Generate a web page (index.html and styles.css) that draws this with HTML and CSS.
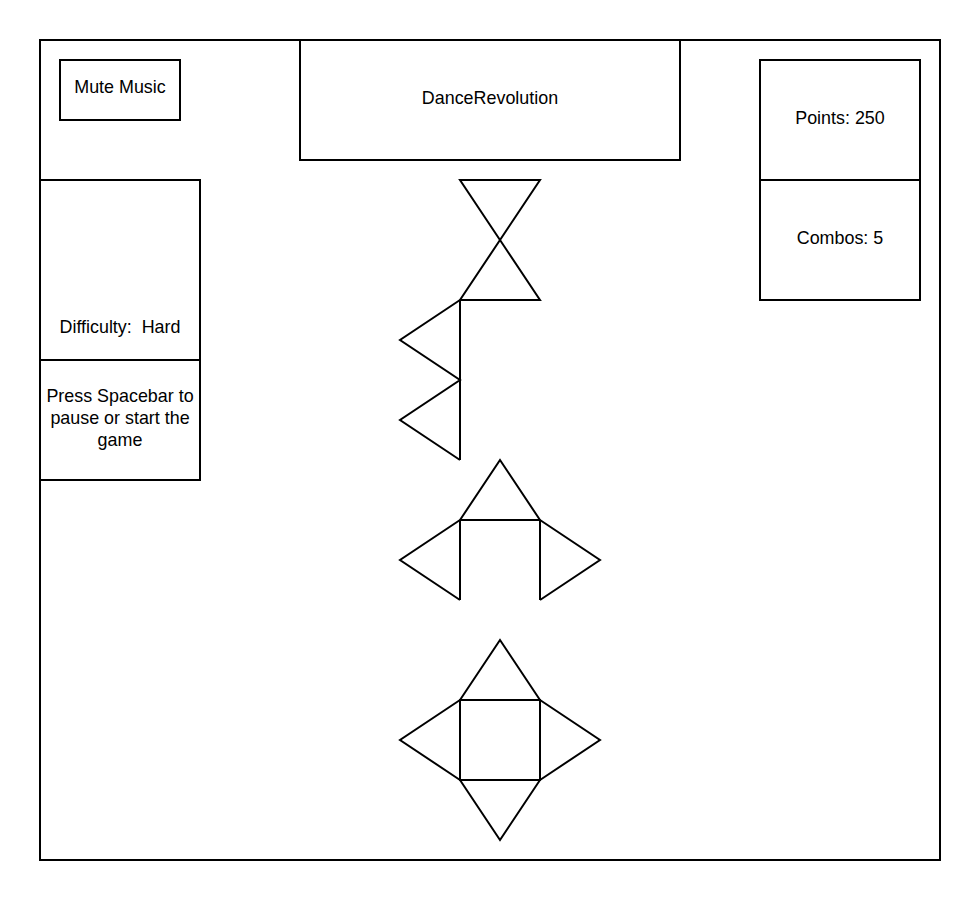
FILE: index.html
```html
<!DOCTYPE html>
<html lang="en">
<head>
    <meta charset="UTF-8">
    <meta name="viewport" content="width=device-width, initial-scale=1.0">
    <title>DanceRevolution</title>
    <link rel="stylesheet" href="styles.css">
</head>
<body>
    <div class="frame">
        <div class="side-left">
            <div class="box mute">Mute Music</div>
            <div class="box difficulty">Difficulty:&nbsp; Hard</div>
            <div class="box hint">Press Spacebar to pause or start the game</div>
        </div>

        <div class="center">
            <div class="box title">DanceRevolution</div>
            <!-- arrow lanes, drawn in page coordinates -->
            <svg class="arrows" width="240" height="690" viewBox="380 161 240 690">
                <g fill="none" stroke="#000" stroke-width="2">
                    <polygon points="460,180 540,180 500,240"/>
                    <polygon points="500,240 540,300 460,300"/>

                    <line x1="460" y1="300" x2="460" y2="460"/>
                    <polyline points="460,300 400,340 460,380 400,420 460,460"/>

                    <polyline points="460,600 460,520 500,460 540,520 540,600"/>
                    <line x1="460" y1="520" x2="540" y2="520"/>
                    <polyline points="460,520 400,560 460,600"/>
                    <polyline points="540,520 600,560 540,600"/>

                    <rect x="460" y="700" width="80" height="80"/>
                    <polyline points="460,700 500,640 540,700"/>
                    <polyline points="460,700 400,740 460,780"/>
                    <polyline points="540,700 600,740 540,780"/>
                    <polyline points="460,780 500,840 540,780"/>
                </g>
            </svg>
        </div>

        <div class="side-right">
            <div class="box points">Points: 250</div>
            <div class="box combos">Combos: 5</div>
        </div>
    </div>
</body>
</html>
```

FILE: styles.css
```css
body {
    margin: 0;
    background-color: #fff;
    color: #000;
    font-family: "Liberation Sans", Arial, sans-serif;
    font-size: 17.9px;
    line-height: 22px;
}

.frame {
    box-sizing: border-box;
    display: flex;
    align-items: flex-start;
    width: 902px;
    height: 822px;
    margin: 39px;
    border: 2px solid #000;
}

.box {
    box-sizing: border-box;
    display: flex;
    justify-content: center;
    align-items: center;
    text-align: center;
    border: 2px solid #000;
}

.side-left {
    display: flex;
    flex-direction: column;
    width: 160px;
}

.mute {
    width: 122px;
    height: 62px;
    margin: 18px 0 0 18px;
    padding-bottom: 6px;
}

.difficulty {
    height: 182px;
    margin-top: 58px;
    border-left: none;
    align-items: flex-end;
    padding-bottom: 21px;
}

.hint {
    height: 120px;
    border-left: none;
    border-top: none;
    padding: 0 2px 4px;
}

.center {
    display: flex;
    flex-direction: column;
    width: 558px;
}

.title {
    width: 382px;
    height: 122px;
    margin: -2px 0 0 98px;
    padding-bottom: 4px;
}

.arrows {
    display: block;
    margin-left: 179px;
}

.side-right {
    display: flex;
    flex-direction: column;
    width: 162px;
    margin-top: 18px;
}

.points {
    height: 122px;
    padding-bottom: 4px;
}

.combos {
    height: 120px;
    border-top: none;
    padding-bottom: 4px;
}
```
